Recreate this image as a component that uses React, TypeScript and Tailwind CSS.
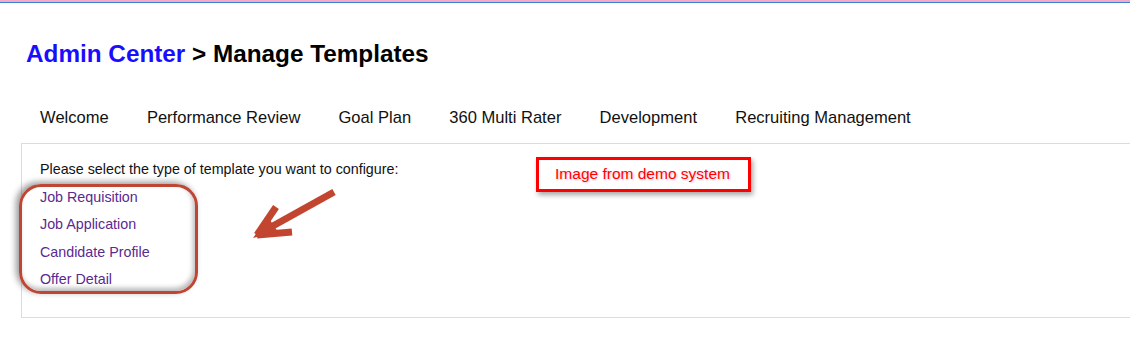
import React from "react";

const tabs = [
  "Welcome",
  "Performance Review",
  "Goal Plan",
  "360 Multi Rater",
  "Development",
  "Recruiting Management",
];

const links = ["Job Requisition", "Job Application", "Candidate Profile", "Offer Detail"];

export default function App() {
  return (
    <div
      className="relative w-[1130px] h-[348px] overflow-hidden bg-white"
      style={{ fontFamily: '"Liberation Sans", Arial, sans-serif' }}
    >
      <div className="h-[2px] bg-[#f5a9c4]" />
      <div className="h-[1px] bg-[#3b7fd9]" />

      <h1 className="mt-[37px] ml-[26px] text-[24.3px] leading-[28px] font-bold text-black">
        <span className="text-[#1a0dff]">Admin Center</span> &gt; Manage Templates
      </h1>

      <div className="ml-[21px] mt-[38px] w-[1140px]">
        <div className="flex h-[37px] items-start pt-[2px] text-[16.55px] leading-[20px] text-[#111]">
          {tabs.map((t) => (
            <div key={t} className="px-[19.1px] whitespace-nowrap">
              {t}
            </div>
          ))}
        </div>
        <div className="border-t border-l border-b border-[#dcdcdc] h-[175px] pl-[18px] pt-[17px] text-[14.3px]">
          <p className="leading-[16px] text-[#111]">
            Please select the type of template you want to configure:
          </p>
          <ul className="mt-[7px]">
            {links.map((l) => (
              <li key={l} className="leading-[27.3px] text-[#5a2a91]">
                {l}
              </li>
            ))}
          </ul>
        </div>
      </div>

      {/* callout rounded rectangle */}
      <div
        className="absolute left-[19px] top-[184px] w-[179px] h-[110px] rounded-[22px] border-[3px] border-[#bd4634]"
        style={{
          boxShadow:
            "-3px -2px 6px rgba(0,0,0,0.4), inset -2px -3px 5px rgba(0,0,0,0.28)",
        }}
      />

      {/* arrow */}
      <svg className="absolute left-0 top-0" width="1130" height="348" viewBox="0 0 1130 348">
        <line x1="334" y1="192" x2="262" y2="232" stroke="#c2452f" strokeWidth="7" />
        <line x1="257" y1="235" x2="276" y2="207" stroke="#c2452f" strokeWidth="7" />
        <line x1="257" y1="235" x2="292" y2="232" stroke="#c2452f" strokeWidth="7" />
        <polygon points="253,238 268,217 278,232" fill="#c2452f" />
      </svg>

      {/* red label */}
      <div
        className="absolute left-[536px] top-[157px] w-[215px] h-[35px] border-[3px] border-[#ff0000] flex items-center justify-center pb-[2px] pr-[2px] text-[15.5px] text-[#ff0000]"
        style={{
          boxShadow: "2px 3px 5px rgba(0,0,0,0.35)",
          textShadow: "1px 1px 2px rgba(255,0,80,0.25)",
        }}
      >
        Image from demo system
      </div>
    </div>
  );
}
